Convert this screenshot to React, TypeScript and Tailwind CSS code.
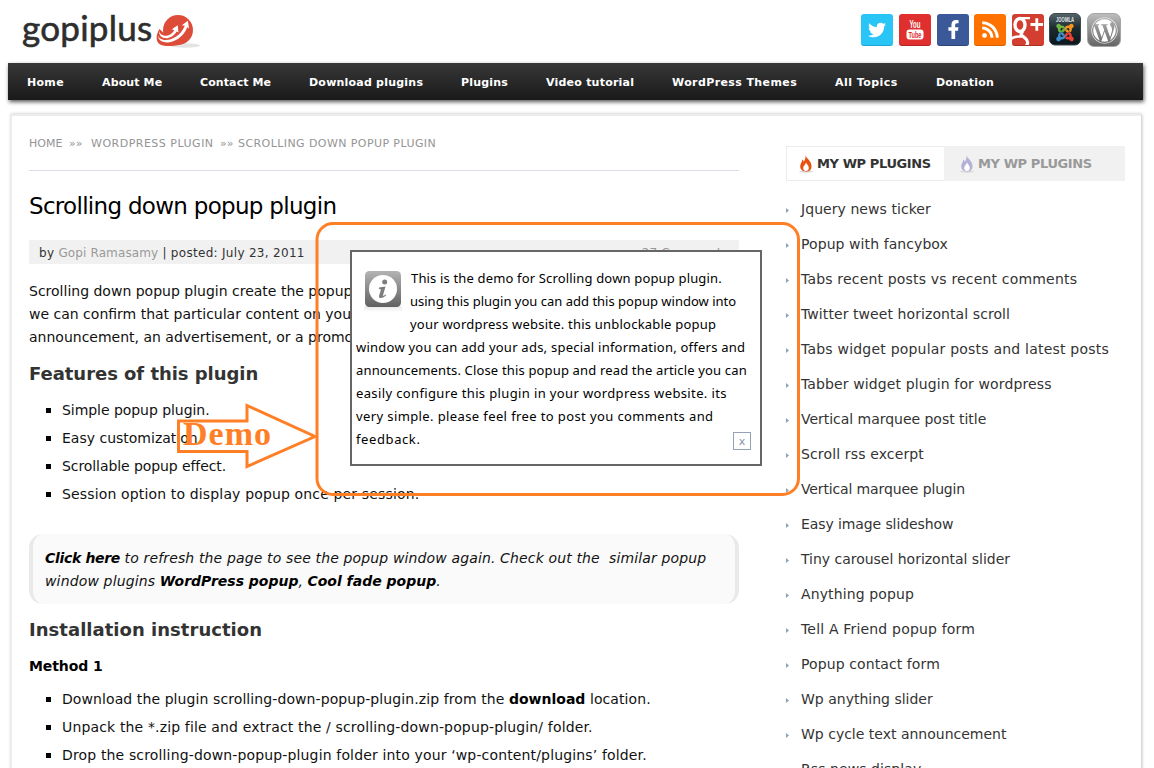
import React from "react";
import { FaTwitter, FaFacebookF, FaRss, FaJoomla, FaWordpress } from "react-icons/fa";

const nav = [
  { label: "Home", cls: "w-[75px] tracking-[0.3px]" },
  { label: "About Me", cls: "w-[98px] tracking-[0.12px]" },
  { label: "Contact Me", cls: "w-[109px] tracking-[0.1px]" },
  { label: "Download plugins", cls: "w-[152px] tracking-[0.22px]" },
  { label: "Plugins", cls: "w-[85px] tracking-[0.2px]" },
  { label: "Video tutorial", cls: "w-[126px] tracking-[0.22px]" },
  { label: "WordPress Themes", cls: "w-[163px] tracking-[0.4px]" },
  { label: "All Topics", cls: "w-[101px] tracking-[0.45px]" },
  { label: "Donation", cls: "w-[96px] tracking-[0.2px]" },
];

const plugins = [
  { label: "Jquery news ticker", cls: "tracking-[0.06px]" },
  { label: "Popup with fancybox", cls: "tracking-[0.08px]" },
  { label: "Tabs recent posts vs recent comments", cls: "tracking-[0.18px]" },
  { label: "Twitter tweet horizontal scroll", cls: "tracking-[0.08px]" },
  { label: "Tabs widget popular posts and latest posts", cls: "tracking-[0.21px]" },
  { label: "Tabber widget plugin for wordpress", cls: "tracking-[0.12px]" },
  { label: "Vertical marquee post title", cls: "tracking-[-0.03px]" },
  { label: "Scroll rss excerpt", cls: "tracking-[0.14px]" },
  { label: "Vertical marquee plugin", cls: "tracking-[-0.14px]" },
  { label: "Easy image slideshow", cls: "tracking-[-0.1px]" },
  { label: "Tiny carousel horizontal slider", cls: "tracking-[-0.02px]" },
  { label: "Anything popup", cls: "tracking-[0.12px]" },
  { label: "Tell A Friend popup form", cls: "tracking-[0.18px]" },
  { label: "Popup contact form", cls: "tracking-[0.1px]" },
  { label: "Wp anything slider", cls: "" },
  { label: "Wp cycle text announcement", cls: "" },
  { label: "Rss news display", cls: "tracking-[0.07px]" },
];

function LogoMark() {
  return (
    <svg width="46" height="34" viewBox="0 0 46 34" className="block">
      <ellipse cx="29" cy="30.500" rx="15" ry="2.200" fill="#e3e3e3" />
      <circle cx="22" cy="15" r="15" fill="#dd4b39" />
      <path d="M3.500 14C-1 21 -0.500 29 7 30.500 15 32 25 30 29 27.500L12 22Z" fill="#dd4b39" />
      <path d="M3.200 15.500C3.500 21.500 13.500 23.500 18.300 15.200L15.800 14.300 21.700 10.200 22.500 17.500 20.600 16.400C14.500 26.500 2 24.500 3.200 15.500Z" fill="#fff" />
      <path d="M2 20.500C4 28 22 27 28.800 10.800L25.800 10.200 31.900 5.800 33 13.500 31.200 12.300C24.500 30 2.500 31.500 2 20.500Z" fill="#fff" />
    </svg>
  );
}

function Tile({ cls, children }: { cls: string; children: React.ReactNode }) {
  return <div className={"flex h-8 w-8 items-center justify-center rounded-[3px] " + cls}>{children}</div>;
}

function Joomla() {
  return (
    <svg width="32" height="33" viewBox="0 0 32 33" className="block">
      <defs>
        <linearGradient id="jg" x1="0" y1="0" x2="0" y2="1">
          <stop offset="0" stopColor="#56666b" />
          <stop offset="0.45" stopColor="#1d2b31" />
          <stop offset="1" stopColor="#0c171c" />
        </linearGradient>
        <clipPath id="j1"><rect x="5" y="10" width="11" height="9.500" /></clipPath>
        <clipPath id="j2"><rect x="16" y="10" width="11" height="9.500" /></clipPath>
        <clipPath id="j3"><rect x="5" y="19.500" width="11" height="10" /></clipPath>
        <clipPath id="j4"><rect x="16" y="19.500" width="11" height="10" /></clipPath>
      </defs>
      <rect x="0.500" y="0.500" width="31" height="31.500" rx="5.500" fill="url(#jg)" stroke="#3b494e" />
      <text x="16" y="9.200" fontSize="8" fontWeight="700" textAnchor="middle" textLength="18" lengthAdjust="spacingAndGlyphs" fill="#e3eaec" fontFamily="Liberation Sans, sans-serif">JOOMLA</text>
      <g clipPath="url(#j1)"><FaJoomla x="6" y="9.500" size={20} color="#6fb544" /></g>
      <g clipPath="url(#j2)"><FaJoomla x="6" y="9.500" size={20} color="#f7941e" /></g>
      <g clipPath="url(#j3)"><FaJoomla x="6" y="9.500" size={20} color="#3c8fd0" /></g>
      <g clipPath="url(#j4)"><FaJoomla x="6" y="9.500" size={20} color="#ee4035" /></g>
    </svg>
  );
}

function Social() {
  return (
    <div className="flex pt-[14px]">
      <Tile cls="bg-[#29c5f6] border-b border-[#1fa6d3]"><FaTwitter size={18} color="#fff" /></Tile>
      <Tile cls="ml-[6px] bg-[#e02f2f] border-b border-[#b82323]">
        <svg width="32" height="32" viewBox="0 0 32 32">
          <text x="16" y="14.300" fontSize="10" fontWeight="700" textAnchor="middle" textLength="11" lengthAdjust="spacingAndGlyphs" fill="#fff" fontFamily="Liberation Sans Narrow, Liberation Sans, sans-serif">You</text>
          <rect x="7.500" y="15.500" width="17" height="10" rx="3" fill="#fff" />
          <text x="16" y="23.800" fontSize="9" fontWeight="700" textAnchor="middle" textLength="13" lengthAdjust="spacingAndGlyphs" fill="#e02f2f" fontFamily="Liberation Sans Narrow, Liberation Sans, sans-serif">Tube</text>
        </svg>
      </Tile>
      <Tile cls="ml-[6px] bg-[#3b5998] border-b border-[#2c4478]"><FaFacebookF size={19} color="#fff" /></Tile>
      <Tile cls="ml-[5px] bg-[#ff7200] border-b border-[#d65f00]"><FaRss size={19} color="#fff" /></Tile>
      <Tile cls="ml-[6px] bg-[#d23e30] border-b border-[#ad2f23] overflow-hidden">
        <svg width="32" height="32" viewBox="0 0 32 32" fill="none" stroke="#fff">
          <ellipse cx="8" cy="11" rx="5" ry="6.500" strokeWidth="3.400" />
          <path d="M7 4.200H18" strokeWidth="2.200" />
          <path d="M11 17.500C7 20.500 10 21.500 13 24 17 27 16 31 13 33" strokeWidth="3.200" />
          <path d="M-1 25C2 22 7 22.500 10 22.500" strokeWidth="2.400" />
          <path d="M18.500 10.500H31M24.800 4.300V16.700" strokeWidth="2.800" />
        </svg>
      </Tile>
      <div className="ml-[5px] -mt-[1px]"><Joomla /></div>
      <div className="ml-[6px] -mt-[1px] flex h-[34px] w-[34px] items-center justify-center rounded-[7px] border border-[#a5a5a5] bg-gradient-to-b from-[#bdbdbd] to-[#666]">
        <FaWordpress size={27} color="#fff" />
      </div>
    </div>
  );
}

function Flame({ cls }: { cls: string }) {
  return (
    <svg width="14" height="18" viewBox="0 0 14 18" className={"block " + cls}>
      <ellipse cx="7" cy="16.500" rx="7" ry="1.200" fill="#d8d8d8" />
      <path d="M6.500 0.500C8 4 12.500 6 12.500 11.200 12.500 14.500 10.500 16.500 7 16.500 3.500 16.500 1.200 14.500 1.200 11.300 1.200 8.500 3 7.500 3.300 4.500 4.200 5.200 4.600 6 4.700 6.800 6 5 6.800 3 6.500 0.500Z" fill="currentColor" />
      <path d="M7 7.500C7.800 9.500 9.800 10.500 9.800 13 9.800 15 8.700 16 7 16 5.300 16 4.200 15 4.200 13 4.200 10.700 6.500 10 7 7.500Z" fill="#fff" />
    </svg>
  );
}

function Bullets({ children }: { children: React.ReactNode[] }) {
  return (
    <ul>
      {children.map((c, i) => (
        <li key={i} className="flex h-7 items-center">
          <span className="ml-[17px] mr-[11px] h-[5px] w-[5px] bg-black" />
          {c}
        </li>
      ))}
    </ul>
  );
}

function Popup() {
  return (
    <div className="absolute left-[350px] top-[250px] h-[216px] w-[412px] border-2 border-[#666] bg-white pl-1 pt-[15px] font-['Noto_Sans','Open_Sans',sans-serif] text-[13px] leading-[23px] text-black">
      <div className="flex">
        <svg width="48" height="46" viewBox="0 0 48 46" className="mr-[7px] mt-[3px] block">
          <defs>
            <linearGradient id="ig" x1="0" y1="0" x2="0" y2="1">
              <stop offset="0" stopColor="#b4b4b4" />
              <stop offset="1" stopColor="#606060" />
            </linearGradient>
            <linearGradient id="is" x1="0" y1="0" x2="0" y2="1">
              <stop offset="0" stopColor="#e6e6e6" />
              <stop offset="1" stopColor="#fff" />
            </linearGradient>
          </defs>
          <path d="M9 36H45L47 42H7Z" fill="url(#is)" />
          <rect x="9" y="1" width="36" height="36" rx="4.500" fill="url(#ig)" />
          <circle cx="27" cy="19" r="14" fill="#fff" />
          <circle cx="28.700" cy="12" r="2.500" fill="#7d7d7d" />
          <path d="M23 17.500L29.500 16.500 27 25.200C26.800 26.400 28 25.800 29.500 24.500L30.200 25.300C28 28 22.500 29.500 23 26L25 19.500 22.800 18.700Z" fill="#7d7d7d" />
        </svg>
        <div className="whitespace-nowrap">
          <p className="tracking-[0.16px]">This is the demo for Scrolling down popup plugin.</p>
          <p className="-ml-px">using this plugin you can add this popup window into</p>
          <p className="-ml-px tracking-[0.22px]">your wordpress website. this unblockable popup</p>
        </div>
      </div>
      <div className="whitespace-nowrap">
        <p className="tracking-[0.24px]">window you can add your ads, special information, offers and</p>
        <p className="tracking-[0.16px]">announcements. Close this popup and read the article you can</p>
        <p className="tracking-[0.37px]">easily configure this plugin in your wordpress website. its</p>
        <p className="tracking-[0.39px]">very simple. please feel free to post you comments and</p>
        <p className="tracking-[0.6px]">feedback.</p>
      </div>
      <div className="absolute bottom-[14px] right-[9px] flex h-[18px] w-[18px] items-center justify-center border border-[#91a3b5] font-['DejaVu_Sans',sans-serif] text-[11px] leading-none text-[#8295a8]">x</div>
    </div>
  );
}

export default function App() {
  return (
    <div className="relative h-[768px] w-[1154px] overflow-hidden bg-white font-['DejaVu_Sans',sans-serif] text-[14px] text-[#111]">
      <header className="flex h-[63px] justify-between pl-[22px] pr-[33px]">
        <div className="flex">
          <span className="mt-[5px] w-[134px] whitespace-nowrap font-['Lato',sans-serif] text-[35px] leading-[44px] tracking-[0.25px] text-[#2e2e2e] [-webkit-text-stroke:0.6px_#2e2e2e]">gopiplus</span>
          <div className="mt-[15px]"><LogoMark /></div>
        </div>
        <Social />
      </header>

      <nav className="ml-2 flex h-[37px] w-[1135px] items-center bg-gradient-to-b from-[#383838] to-[#1a1a1a] pl-[19px] pt-[3px] text-[11px] font-bold text-white shadow-[1px_2px_4px_rgba(0,0,0,0.65)]">
        {nav.map((n) => (
          <a key={n.label} className={"block whitespace-nowrap " + n.cls}>{n.label}</a>
        ))}
      </nav>

      <div className="ml-[10px] mt-[14px] flex h-[700px] w-[1131px] border-2 border-r-0 border-[#ececec] bg-white pl-[17px] shadow-[1px_0_3px_rgba(0,0,0,0.25)]">
        <main className="w-[710px] whitespace-nowrap">
          <div className="flex h-[55px] items-center border-b border-[#dcdce6] pt-[2px] text-[11px] text-[#949494]">
            <span className="w-[40px]">HOME</span>
            <span className="w-[22px]">»»</span>
            <span className="w-[129px] tracking-[0.5px]">WORDPRESS PLUGIN</span>
            <span className="w-[18px]">»»</span>
            <span className="tracking-[0.42px]">SCROLLING DOWN POPUP PLUGIN</span>
          </div>
          <h1 className="mt-[19px] text-[23px] leading-[32px] tracking-[-0.7px] text-black">Scrolling down popup plugin</h1>
          <div className="mt-[18px] flex h-6 items-center justify-between bg-[#f1f1f1] pl-[10px] pr-[11px] pt-px text-[12px] tracking-[0.3px] text-[#333]">
            <span>by <span className="tracking-[0.12px] text-[#999]">Gopi Ramasamy</span> | posted: July 23, 2011</span>
            <span className="tracking-[0.2px] text-[#999]">27 Comments</span>
          </div>
          <div className="mt-4 leading-[23px]">
            <p>Scrolling down popup plugin create the popup window, using this</p>
            <p>we can confirm that particular content on your page such as</p>
            <p>announcement, an advertisement, or a promotion</p>
          </div>
          <h2 className="mt-[13px] text-[18px] font-bold leading-[24px] tracking-[-0.04px] text-[#333]">Features of this plugin</h2>
          <div className="mt-[10px]">
            <Bullets>
              {[
                <span className="tracking-[-0.05px]">Simple popup plugin.</span>,
                <span>Easy customization</span>,
                <span className="tracking-[-0.08px]">Scrollable popup effect.</span>,
                <span className="tracking-[0.15px]">Session option to display popup once per session.</span>,
              ]}
            </Bullets>
          </div>
          <div className="mt-[26px] h-[70px] rounded-[14px] border-x-4 border-[#e9e9e9] bg-[#fafafa] pl-3 pt-[13px] italic leading-[23px]">
            <p className="whitespace-pre tracking-[0.14px]"><b className="tracking-[-0.32px] text-black">Click here</b> to refresh the page to see the popup window again. Check out the  similar popup</p>
            <p><span className="tracking-[0.15px]">window plugins </span><b className="text-black">WordPress popup</b>, <b className="text-black">Cool fade popup</b>.</p>
          </div>
          <h2 className="mt-[14px] text-[18px] font-bold leading-[24px] tracking-[0.03px] text-[#333]">Installation instruction</h2>
          <h3 className="mt-[14px] font-bold leading-[20px] tracking-[-0.1px] text-black">Method 1</h3>
          <div className="mt-[9px]">
            <Bullets>
              {[
                <span className="tracking-[0.09px]">Download the plugin scrolling-down-popup-plugin.zip from the <b className="tracking-normal text-black">download</b> location.</span>,
                <span className="tracking-[0.15px]">Unpack the *.zip file and extract the / scrolling-down-popup-plugin/ folder.</span>,
                <span className="tracking-[0.15px]">Drop the scrolling-down-popup-plugin folder into your ‘wp-content/plugins’ folder.</span>,
              ]}
            </Bullets>
          </div>
        </main>

        <aside className="ml-[47px] mt-[30px] w-[339px] whitespace-nowrap">
          <div className="flex h-[35px] bg-[#f1f1f1] text-[13px] font-bold tracking-[-0.4px]">
            <div className="flex w-[158px] items-center border border-r-0 border-[#ececec] bg-white pl-[12px] text-[#333]">
              <Flame cls="text-[#e8500f]" />
              <span className="ml-1">MY WP PLUGINS</span>
            </div>
            <div className="flex items-center pl-[16px] text-[#999]">
              <Flame cls="text-[#b5b1d6]" />
              <span className="ml-1">MY WP PLUGINS</span>
            </div>
          </div>
          <ul className="mt-[11px] text-[#333]">
            {plugins.map((p) => (
              <li key={p.label} className="flex h-[35px] items-center">
                <svg width="3" height="5" viewBox="0 0 3 5" className="mr-3 mt-[2px] block"><path d="M0 0L3 2.500 0 5Z" fill="#8fa3b5" /></svg>
                <span className={p.cls}>{p.label}</span>
              </li>
            ))}
          </ul>
        </aside>
      </div>

      <Popup />

      <svg width="630" height="280" viewBox="0 0 630 280" className="pointer-events-none absolute left-[175px] top-[220px]" fill="none" stroke="#ff7f27" strokeWidth="3">
        <rect x="142" y="3.500" width="481.500" height="271" rx="16" />
        <path d="M3.500 201H72V185.500L140 216.500 72 246.500V231.500H3.500Z" />
        <text x="8" y="225" fontFamily="Liberation Serif, serif" fontWeight="700" fontSize="34" textLength="88" fill="#ff7f27" stroke="none">Demo</text>
      </svg>
    </div>
  );
}
